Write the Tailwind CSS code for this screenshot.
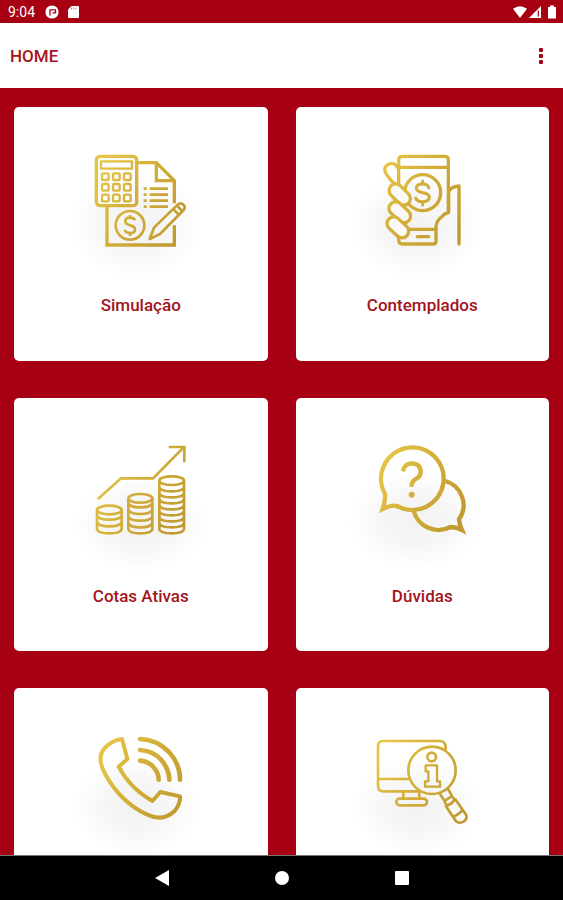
<!DOCTYPE html>
<html lang="pt-BR">
<head>
    <meta charset="UTF-8">
    <meta name="viewport" content="width=device-width, initial-scale=1.0">
    <title>Home</title>
    <script src="https://cdn.jsdelivr.net/npm/@tailwindcss/browser@4"></script>
</head>
<body class="flex h-screen flex-col overflow-hidden bg-[#a60012] font-[Roboto,sans-serif]">
    <!-- Shared gradient and shadow -->
    <svg class="absolute size-0" aria-hidden="true">
        <defs>
            <linearGradient id="gold" gradientUnits="userSpaceOnUse" x1="90" y1="120" x2="340" y2="260">
                <stop offset="0" stop-color="#e4c446"/>
                <stop offset="0.5" stop-color="#d1ac38"/>
                <stop offset="1" stop-color="#c09a30"/>
            </linearGradient>
            <radialGradient id="shade">
                <stop offset="0" stop-color="#000" stop-opacity="0.05"/>
                <stop offset="0.5" stop-color="#000" stop-opacity="0.035"/>
                <stop offset="1" stop-color="#000" stop-opacity="0"/>
            </radialGradient>
        </defs>
    </svg>

    <!-- Status bar -->
    <div class="flex h-[23px] shrink-0 items-center justify-between pr-1.5 pl-2 text-white">
        <div class="flex items-center gap-2.5">
            <span class="text-[14px] leading-6">9:04</span>
            <svg class="size-3.5" viewBox="0 0 14 14" fill="none">
                <circle cx="7" cy="7" r="6.6" fill="#fff"/>
                <path d="M5 10.500V4.800h5.500v3H7.500" stroke="#a60012" stroke-width="1.300"/>
            </svg>
            <svg class="-ml-1 h-3 w-4" viewBox="0 0 16 12">
                <path d="M6.500 0H13q1 0 1 1v10q0 1-1 1H4q-1 0-1-1V3.500z" fill="#fff"/>
                <path d="M6.500 1.500v2M8.700 1.500v2M11 1.500v2" stroke="#a60012" stroke-width="0.500"/>
            </svg>
        </div>
        <div class="flex items-center gap-0.5">
            <svg class="h-3 w-3.5" viewBox="0 0 14 12"><path d="M0 2.800Q7-2.200 14 2.800L7 12z" fill="#fff"/></svg>
            <svg class="size-3" viewBox="0 0 12 12">
                <path d="M0 12 12 0v12z" fill="#fff"/>
                <path d="M9.300 4.500v6" stroke="#a60012" stroke-width="1.200"/>
            </svg>
            <svg class="ml-1 h-3.5 w-2.5" viewBox="0 0 10 14"><path d="M3 .5h4V2h1.500q.5 0 .5.5v10.500q0 .5-.5.5h-7q-.5 0-.5-.5V2.500Q1 2 1.500 2H3z" fill="#fff"/></svg>
        </div>
    </div>

    <!-- Toolbar -->
    <header class="flex h-[65px] shrink-0 items-center justify-between bg-white px-2.5 pt-px text-[#a31420]">
        <h1 class="text-[17px] leading-6 font-medium">HOME</h1>
        <button type="button" aria-label="Mais opções" class="flex h-10 w-6 items-center justify-center">
            <svg class="h-4 w-1" viewBox="0 0 4 16" fill="#a60012">
                <rect width="4" height="4" rx="1"/><rect y="6" width="4" height="4" rx="1"/><rect y="12" width="4" height="4" rx="1"/>
            </svg>
        </button>
    </header>

    <!-- Menu cards -->
    <main class="min-h-0 flex-1 overflow-hidden px-3.5 pt-[19px]">
        <nav class="grid grid-cols-2 gap-x-7 gap-y-[37px] text-[17px] leading-6 font-medium text-[#a31420]">
            <a href="#simulacao" class="flex aspect-square flex-col items-center rounded-[5px] bg-white pt-8">
                <svg class="size-[140px] shrink-0 overflow-visible" viewBox="4 12 420 420" fill="none" stroke="url(#gold)" stroke-width="10" stroke-linejoin="round">
                    <ellipse cx="200" cy="270" rx="200" ry="160" fill="url(#shade)" stroke="none"/>
                    <rect x="80" y="64" width="121" height="148" rx="11" fill="#fbfbfb"/>
                    <rect x="94" y="79" width="93" height="22" stroke-width="7"/>
                    <g stroke-width="7">
                        <rect x="97" y="115" width="20" height="20" rx="4"/><rect x="130" y="115" width="20" height="20" rx="4"/><rect x="163" y="115" width="20" height="20" rx="4"/>
                        <rect x="97" y="147" width="20" height="20" rx="4"/><rect x="130" y="147" width="20" height="20" rx="4"/><rect x="163" y="147" width="20" height="20" rx="4"/>
                        <rect x="97" y="179" width="20" height="20" rx="4"/><rect x="130" y="179" width="20" height="20" rx="4"/><rect x="163" y="179" width="20" height="20" rx="4"/>
                    </g>
                    <path d="M203 83h57l54 54v68M314 271v59H112V213" stroke-linejoin="miter"/>
                    <path d="M260 84v53h53" stroke-linejoin="miter"/>
                    <path d="M240 161h55M240 179h55M240 197h55M240 215h55M222 161h9M222 179h9M222 197h9M222 215h9" stroke-width="8"/>
                    <circle cx="181" cy="271" r="43" stroke-width="8"/>
                    <path d="M196 256q-3-8-15-8-14 0-14 11 0 8 14 12 15 3 15 13 0 10-15 10-12 0-16-9M181 240v8M181 294v9" stroke-width="8"/>
                    <path d="M240 312l13-34 71-69q8-7 16-1 9 7 2 17l-71 72zM310 221l17 18M321 211l17 17" stroke-width="8"/>
                </svg>
                <span class="mt-3.5">Simulação</span>
            </a>

            <a href="#contemplados" class="flex aspect-square flex-col items-center rounded-[5px] bg-white pt-8">
                <svg class="size-[140px] shrink-0 overflow-visible" viewBox="6 12 420 420" fill="none" stroke="url(#gold)" stroke-width="10" stroke-linecap="round" stroke-linejoin="round">
                    <ellipse cx="200" cy="270" rx="200" ry="160" fill="url(#shade)" stroke="none"/>
                    <path d="M146 150V75q0-11 11-11h127q11 0 11 11v158q-10 1-18 11-19 12-19 34v42q0 7-9 7H157q-11 0-11-12v-8"/>
                    <path d="M146 97h149M160 283h98M202 305h34"/>
                    <circle cx="218" cy="173" r="54"/>
                    <path d="M236 158q-2-11-18-11-19 0-19 13 0 10 19 13 20 3 20 14 0 13-20 13-18 0-21-11M218 138v8M218 200v10" stroke-width="9"/>
                    <path d="M141 150q-12-4-22-19-10-12-14-22-3-12 6-19 10-6 23-3l10 12"/>
                    <g fill="#fafafa">
                        <rect x="113" y="159" width="74" height="40" rx="20" transform="rotate(45 150 178)"/>
                        <rect x="113" y="212" width="74" height="40" rx="20" transform="rotate(43 150 231)"/>
                        <rect x="107" y="258" width="74" height="40" rx="20" transform="rotate(43 145 277)"/>
                    </g>
                    <path d="M296 171q5-16 31-18v174M296 171v60"/>
                </svg>
                <span class="mt-3.5">Contemplados</span>
            </a>

            <a href="#cotas-ativas" class="flex aspect-square flex-col items-center rounded-[5px] bg-white pt-8">
                <svg class="size-[140px] shrink-0 overflow-visible" viewBox="4 0 420 420" fill="none" stroke="url(#gold)" stroke-width="8">
                    <ellipse cx="215" cy="280" rx="200" ry="145" fill="url(#shade)" stroke="none"/>
                    <path d="M84 208l70-63h96l92-93M297 51h47v46"/>
                    <!-- Coin stacks -->
                    <ellipse cx="119" cy="240" rx="37" ry="13"/>
                    <path d="M82 240v58q4 12 37 12t37-12v-58M82 256q4 13 37 13t37-13M82 276q4 13 37 13t37-13"/>
                    <ellipse cx="212" cy="205" rx="36" ry="13"/>
                    <path d="M176 205v93q4 12 36 12t36-12v-93M176 219q4 13 36 13t36-13M176 239q4 13 36 13t36-13M176 259q4 13 36 13t36-13M176 279q4 13 36 13t36-13"/>
                    <ellipse cx="306" cy="152" rx="37" ry="13"/>
                    <path d="M269 152v146q4 12 37 12t37-12V152M269 172q4 12 37 12t37-12M269 190q4 12 37 12t37-12M269 208q4 12 37 12t37-12M269 226q4 12 37 12t37-12M269 244q4 12 37 12t37-12M269 262q4 12 37 12t37-12M269 280q4 12 37 12t37-12"/>
                </svg>
                <span class="mt-3.5">Cotas Ativas</span>
            </a>

            <a href="#duvidas" class="flex aspect-square flex-col items-center rounded-[5px] bg-white pt-8">
                <svg class="size-[140px] shrink-0 overflow-visible" viewBox="6 0 420 420" fill="none" stroke="url(#gold)" stroke-width="13">
                    <ellipse cx="195" cy="270" rx="200" ry="150" fill="url(#shade)" stroke="none"/>
                    <path d="M286 153A75 75 0 0 1 327 268q1 14 9 32-17-9-35-9A77 77 0 0 1 191 243"/>
                    <path d="M105 192A94 94 0 1 1 141 228q-15-5-43 9 9-27 7-45z"/>
                    <path d="M159 124q4-23 25-24 28 0 28 26 0 12-10 18-18 9-18 26"/>
                    <circle cx="185" cy="194" r="9" fill="url(#gold)" stroke="none"/>
                </svg>
                <span class="mt-3.5">Dúvidas</span>
            </a>

            <a href="#telefone" aria-label="Telefone" class="flex aspect-square flex-col items-center rounded-[5px] bg-white pt-8">
                <svg class="size-[140px] shrink-0 overflow-visible" viewBox="4 0 420 420" fill="none" stroke="url(#gold)" stroke-width="12" stroke-linecap="round" stroke-linejoin="round">
                    <ellipse cx="200" cy="260" rx="190" ry="150" fill="url(#shade)" stroke="none"/>
                    <path d="M157 57l16 60-26 23q34 65 101 103l24-27 59 13q2 21-17 45-35 32-81 10-80-37-127-123-25-47-4-73 22-27 55-31z"/>
                    <path d="M211 57q51 2 87 39 33 36 33 83M211 90q38 2 63 29 24 27 25 60M211 122q25 2 40 19 16 17 16 38" stroke-width="14"/>
                </svg>
            </a>

            <a href="#informacoes" aria-label="Informações" class="flex aspect-square flex-col items-center rounded-[5px] bg-white pt-8">
                <svg class="size-[140px] shrink-0 overflow-visible" viewBox="6 0 420 420" fill="none" stroke="url(#gold)" stroke-width="8" stroke-linecap="round" stroke-linejoin="round">
                    <ellipse cx="200" cy="260" rx="190" ry="150" fill="url(#shade)" stroke="none"/>
                    <path d="M287 89V80q-2-17-18-17H99q-15 0-15 17v117q0 17 16 17h107M86 177h90M160 216v19M208 216v19"/>
                    <rect x="139" y="236" width="92" height="20" rx="10"/>
                    <circle cx="246" cy="151" r="71"/>
                    <circle cx="245" cy="111" r="13"/>
                    <path d="M227 136h34v48h9v16h-45v-16h10v-30h-8z" stroke-width="7"/>
                    <path d="M270 222l14 21 22-15-12-21M283 244l7 12M305 228l9 11"/>
                    <path d="M288 259q17-7 28-21l33 48q4 11-9 19-13 7-22-1zM309 290q17-5 28-20"/>
                </svg>
            </a>
        </nav>
    </main>

    <!-- System navigation -->
    <footer class="flex h-[45px] shrink-0 justify-center border-t border-[#777] bg-black">
        <button type="button" aria-label="Voltar" class="flex w-30 items-center justify-center">
            <svg class="size-4" viewBox="0 0 16 16" fill="#fff"><path d="M1 8 15 0v16z"/></svg>
        </button>
        <button type="button" aria-label="Início" class="flex w-30 items-center justify-center">
            <span class="size-3.5 rounded-full bg-white"></span>
        </button>
        <button type="button" aria-label="Recentes" class="flex w-30 items-center justify-center">
            <span class="size-3.5 rounded-[1px] bg-white"></span>
        </button>
    </footer>
</body>
</html>
